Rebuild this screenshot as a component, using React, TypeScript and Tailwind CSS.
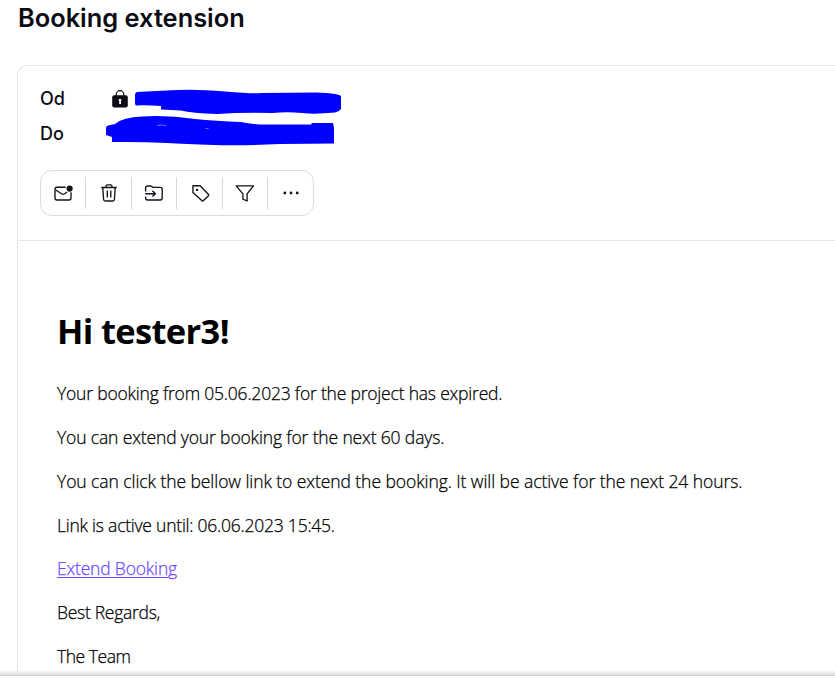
import type { ReactNode } from "react";

function Icon({ children, className = "" }: { children: ReactNode; className?: string }) {
  return (
    <svg width="20" height="20" viewBox="0 0 20 20" fill="none" stroke="#11131a" strokeWidth="1.35" strokeLinejoin="round" className={className}>
      {children}
    </svg>
  );
}

function Tool({ width, label, children }: { width: string; label: string; children: ReactNode }) {
  return (
    <button aria-label={label} className={`flex h-8 shrink-0 items-center justify-center ${width}`}>
      {children}
    </button>
  );
}

function Toolbar() {
  return (
    <div className="flex h-[46px] w-[274px] items-center rounded-[12px] border border-[#dcdcdc]">
      <Tool width="w-[45px] border-r border-[#d8d8d8]" label="Mark unread">
        <Icon className="translate-x-[0.5px]">
          <path d="M12.2 4.2H3.5A2 2 0 0 0 1.5 6.2v8.8a2 2 0 0 0 2 2h12a2 2 0 0 0 2-2V9.2" />
          <path d="M1.9 6.8 8.4 11a2 2 0 0 0 2.2 0l3-2" />
          <circle cx="16.1" cy="5.6" r="3.1" fill="#11131a" stroke="none" />
        </Icon>
      </Tool>
      <Tool width="w-[46px] border-r border-[#d8d8d8]" label="Delete">
        <Icon>
          <path d="M2.2 4.5h15.6M7 4.3V3.2c0-.8.5-1.3 1.3-1.3h3.4c.8 0 1.3.5 1.3 1.3v1.1M3.8 4.7l.8 11.8c.1.9.7 1.5 1.6 1.5h7.6c.9 0 1.5-.6 1.6-1.5l.8-11.8M8.3 7.6v7M11.8 7.6v7" />
        </Icon>
      </Tool>
      <Tool width="w-[45px] border-r border-[#d8d8d8]" label="Move">
        <Icon>
          <path d="M1.6 8.5V5a2 2 0 0 1 2-2h3.2l2.4 1.4h7a2 2 0 0 1 2 2V15a2 2 0 0 1-2 2H3.6a2 2 0 0 1-2-2v-1.4M1.2 10.7h10M8.4 7.8l3 2.9-3 2.9" />
        </Icon>
      </Tool>
      <Tool width="w-[46px] border-r border-[#d8d8d8]" label="Label">
        <Icon className="translate-x-px">
          <path d="M1.9 3.3c0-.4.2-.6.6-.6h6.7L17.5 11.5c.4.4.4.8 0 1.2l-5.3 5.1c-.4.4-.8.4-1.2 0L1.9 9.5Z" />
          <circle cx="6.1" cy="6.9" r="1.2" fill="#11131a" stroke="none" />
        </Icon>
      </Tool>
      <Tool width="w-[45px] border-r border-[#d8d8d8]" label="Filter">
        <Icon>
          <path d="M1.2 2.9h17.3l-6.4 8v7.1l-4.2-1.8v-5.3Z" />
        </Icon>
      </Tool>
      <Tool width="w-[45px]" label="More">
        <Icon>
          <g fill="#11131a" stroke="none">
            <circle cx="3.8" cy="10" r="1.4" />
            <circle cx="10" cy="10" r="1.4" />
            <circle cx="16.2" cy="10" r="1.4" />
          </g>
        </Icon>
      </Tool>
    </div>
  );
}

function Lock() {
  return (
    <svg width="16" height="18" viewBox="0 0 16 18" className="mt-[9px] ml-[6px] shrink-0" aria-label="Encrypted">
      <path d="M4.2 7V4.5a3.8 3.8 0 0 1 7.6 0V7" fill="none" stroke="#0c0c14" strokeWidth="1.2" />
      <rect x=".2" y="5.3" width="15.6" height="12.2" rx="2" fill="#0c0c14" />
      <path d="M6.8 9h2.4v1.8H9V14H7.2v-3.2h-.4Z" fill="#fff" />
    </svg>
  );
}

function Header() {
  return (
    <header className="h-[175px] border-b border-[#eae7e4] pl-[22px] pt-[15px]">
      <div className="flex h-[35px]">
        <span className="w-[66px] text-[18px] leading-[35px] font-medium">Od</span>
        <Lock />
        <svg width="216" height="35" viewBox="0 0 216 35" className="ml-[7px]">
          <path d="M2 11Q20 10 43 9Q62 8 90 10.5T127 12Q155 11.5 181 11.5Q202 12 206 15V28Q204 31 200 31.5Q180 33.5 167 32Q151 30.5 138 32Q110 31 82 33Q57 32 46 29.5L26 28.5V25Q12 24 1 24.5Q0 24 0 22V14Q0 11.5 2 11Z" fill="#0000ff" />
        </svg>
      </div>
      <div className="flex h-[35px]">
        <span className="w-[66px] text-[18px] leading-[35px] font-medium">Do</span>
        <svg width="230" height="35" viewBox="0 0 230 35">
          <path d="M0 11L2 9.5L9 8Q17 1 36 .5Q62-1 89 3Q110 5 135 6Q147 9 166 8.5H205.5V7H227L228 12V27.5Q204 27.5 174 28Q135 30 108 29Q78 28 61 27Q33 25.5 6 26V21L0 19Z" fill="#0000ff" />
          <path d="M51 9.5q5-.7 9 0M99.5 12.5h3" fill="none" stroke="#aeb4ff" strokeWidth=".6" />
        </svg>
      </div>
      <div className="mt-[19px]">
        <Toolbar />
      </div>
    </header>
  );
}

const lines = [
  { text: "Your booking from 05.06.2023 for the project has expired.", tracking: "tracking-[-0.2px]" },
  { text: "You can extend your booking for the next 60 days.", tracking: "tracking-[-0.14px]" },
  { text: "You can click the bellow link to extend the booking. It will be active for the next 24 hours.", tracking: "tracking-[-0.07px]" },
  { text: "Link is active until: 06.06.2023 15:45.", tracking: "tracking-[-0.23px]" },
];

export default function App() {
  return (
    <div className="flex h-[678px] w-[835px] flex-col overflow-hidden bg-white font-['Inter',sans-serif] text-[#0c0c14]">
      <div className="h-[65px] shrink-0 pl-[18px] pt-[3px]">
        <h1 className="text-[25.4px] leading-[30px] font-semibold whitespace-nowrap">Booking extension</h1>
      </div>
      <main className="ml-[17px] h-[610px] shrink-0 overflow-hidden rounded-tl-[10px] border-t border-l border-[#e6e6e6]">
        <Header />
        <article className="pt-[65px] pl-[39px] font-['Open_Sans','Noto_Sans',sans-serif] text-[17.5px] leading-[24px] font-light whitespace-nowrap text-black">
          <h2 className="mb-[25px] text-[34.5px] leading-[50px] font-bold tracking-[-0.65px]">Hi tester3!</h2>
          <div className="flex flex-col items-start gap-[19.85px] [-webkit-text-stroke:0.25px_currentColor]">
            {lines.map((line) => (
              <p key={line.text} className={line.tracking}>{line.text}</p>
            ))}
            <a href="#" className="tracking-[-0.18px] text-[#6d4aff] underline decoration-1 underline-offset-2">Extend Booking</a>
            <p className="tracking-[-0.28px]">Best Regards,</p>
            <p className="tracking-[-0.45px]">The Team</p>
          </div>
        </article>
      </main>
      <div className="relative -mt-[5px] h-[6px] shrink-0 border-b border-[#d3d3d3] bg-linear-to-b from-transparent to-[#dedede]" />
    </div>
  );
}
